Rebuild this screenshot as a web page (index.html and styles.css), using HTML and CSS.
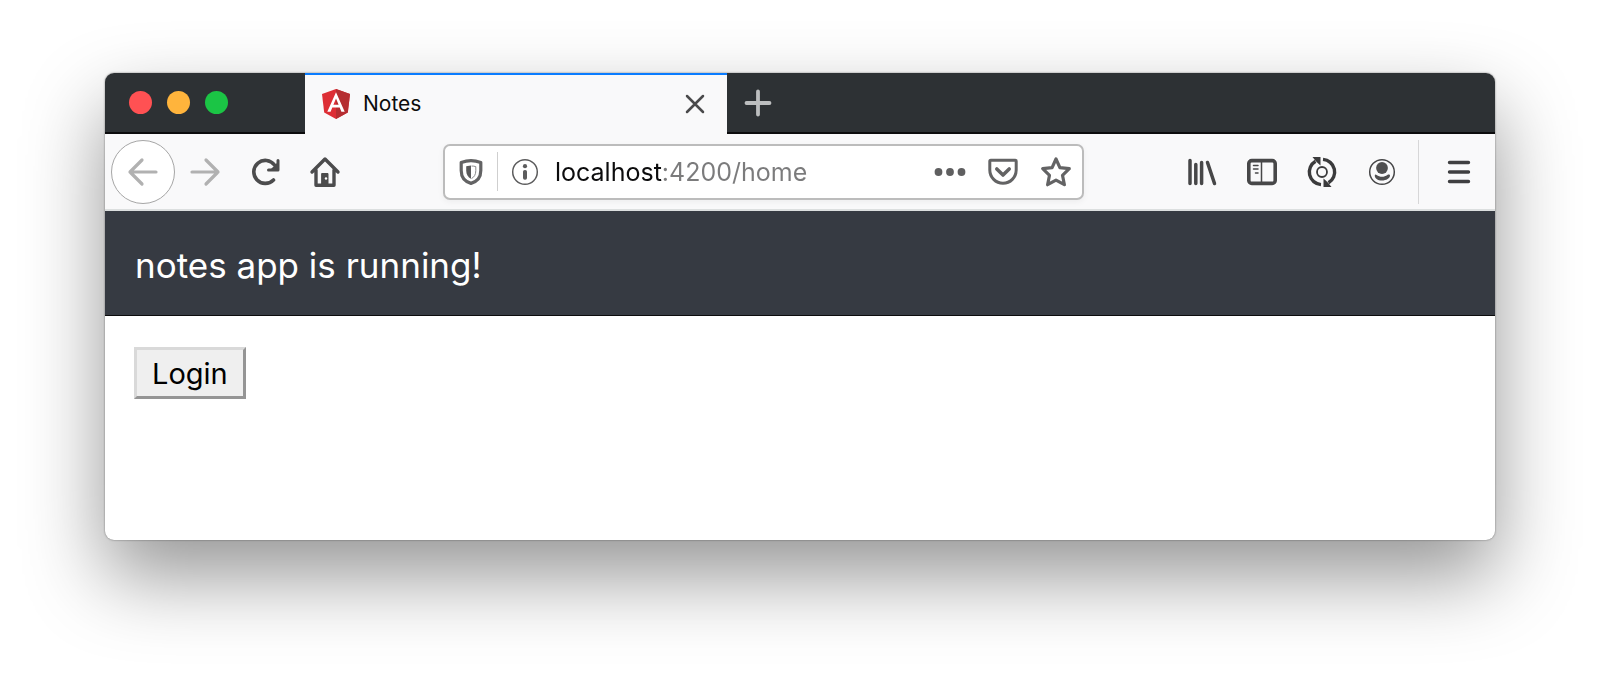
FILE: index.html
```html
<!DOCTYPE html>
<html lang="en">
    <head>
        <title>Notes</title>
        <meta charset="UTF-8" />
        <meta name="viewport" content="width=device-width, initial-scale=1.0" />
        <link rel="stylesheet" href="styles.css">
    </head>
    <body>
        <div class="window">
            <!-- Title bar with the tabs -->
            <div class="tabbar">
                <div class="lights">
                    <button class="light red" aria-label="Close window"></button>
                    <button class="light yellow" aria-label="Minimize"></button>
                    <button class="light green" aria-label="Full screen"></button>
                </div>
                <div class="tab">
                    <svg class="logo" viewBox="0 0 28 30">
                        <path fill="#dd2e35" d="M14 0 0 5l2.200 18.500L14 30l11.800-6.500L28 5z"/>
                        <path fill="#b52e31" d="M14 0v30l11.800-6.500L28 5z"/>
                        <path fill="#fff" d="M14 3.300 5.300 22.800h3.300l1.700-4.400h7.400l1.700 4.400h3.300zm0 6.200 2.600 6.200h-5.200z"/>
                    </svg>
                    <span class="tab-title">Notes</span>
                    <button class="icon-btn tab-close" aria-label="Close tab">
                        <svg width="20" height="20" viewBox="0 0 20 20" fill="none" stroke="#4a4a4b" stroke-width="2.500" stroke-linecap="round">
                            <path d="M2 2l16 16M18 2 2 18"/>
                        </svg>
                    </button>
                </div>
                <button class="icon-btn new-tab" aria-label="New tab">
                    <svg width="28" height="28" viewBox="0 0 28 28" fill="none" stroke="#bcbebf" stroke-width="3.800" stroke-linecap="round">
                        <path d="M14 2.500v23M2.500 14h23"/>
                    </svg>
                </button>
            </div>

            <!-- Navigation toolbar -->
            <div class="toolbar">
                <button class="icon-btn back" aria-label="Back">
                    <svg width="32" height="32" viewBox="0 0 32 32" fill="none" stroke="#b1b1b1" stroke-width="3.200" stroke-linecap="round" stroke-linejoin="round">
                        <path d="M29 16H3M15 4 3 16l12 12"/>
                    </svg>
                </button>
                <button class="icon-btn tool" aria-label="Forward">
                    <svg width="32" height="32" viewBox="0 0 32 32" fill="none" stroke="#b1b1b1" stroke-width="3.200" stroke-linecap="round" stroke-linejoin="round">
                        <path d="M3 16h26M17 4l12 12-12 12"/>
                    </svg>
                </button>
                <button class="icon-btn tool" aria-label="Reload">
                    <svg width="32" height="32" viewBox="0 0 32 32" fill="none" stroke="#4c4c4d" stroke-width="3.600" stroke-linecap="round" stroke-linejoin="round">
                        <path d="M24.500 24A11.500 11.500 0 1 1 25.500 9"/>
                        <path stroke-width="3" d="M29 4.500V14h-9.500"/>
                        <path fill="#4c4c4d" stroke="none" d="M29 6v8h-8z"/>
                    </svg>
                </button>
                <button class="icon-btn tool" aria-label="Home">
                    <svg width="32" height="32" viewBox="0 0 32 32" fill="none" stroke="#4c4c4d" stroke-width="3.400" stroke-linecap="round" stroke-linejoin="round">
                        <path d="M3 16 16 3l13 13M7 14v15.200h18V14"/>
                        <path fill="#4c4c4d" stroke-width="1" d="M13 17.500h6V28h-6z"/>
                        <circle cx="17" cy="22.500" r="1.200" fill="#fff" stroke="none"/>
                    </svg>
                </button>

                <div class="urlbar">
                    <button class="icon-btn shield" aria-label="Tracking protection">
                        <svg width="26" height="28" viewBox="0 0 26 28">
                            <path fill="none" stroke="#636364" stroke-width="3.200" stroke-linejoin="round" d="M13 2.600c3.600 0 6.400.600 9.800 1.800v8.200c0 6.800-4 11.200-9.800 12.800-5.800-1.600-9.800-6-9.800-12.800V4.400C6.600 3.200 9.400 2.600 13 2.600z"/>
                            <path fill="#5a5a5b" d="M13 7.500v13.300c-3-1.400-4.800-4.300-4.800-8.200V8.300z"/>
                            <path fill="none" stroke="#8a8a8b" stroke-width="1" d="M13.500 8c1.500 0 3 .200 4.300.600v4c0 3.900-1.600 6.600-4.300 7.900"/>
                        </svg>
                    </button>
                    <span class="url-divider"></span>
                    <button class="icon-btn info" aria-label="Site information">
                        <svg width="28" height="28" viewBox="0 0 28 28" fill="#5c5c5d">
                            <circle cx="14" cy="14" r="12.300" fill="none" stroke="#5c5c5d" stroke-width="1.500"/>
                            <circle cx="14" cy="8.200" r="2.100"/>
                            <rect x="12" y="12" width="4" height="9.800" rx="1.800"/>
                        </svg>
                    </button>
                    <input class="url" type="text" value="localhost:4200/home" aria-label="Address">
                    <div class="url-actions">
                        <button class="icon-btn" aria-label="Page actions">
                            <svg width="32" height="32" viewBox="0 0 32 32" fill="#5f5f60">
                                <circle cx="4.500" cy="16" r="3.900"/>
                                <circle cx="16" cy="16" r="3.900"/>
                                <circle cx="27.500" cy="16" r="3.900"/>
                            </svg>
                        </button>
                        <button class="icon-btn" aria-label="Save to Pocket">
                            <svg width="32" height="32" viewBox="0 0 32 32" fill="none" stroke="#636364" stroke-width="3" stroke-linecap="round" stroke-linejoin="round">
                                <path d="M3.800 4.200h24.400q1 0 1 1V14a13.200 13.200 0 0 1-26.400 0V5.200q0-1 1-1z"/>
                                <path stroke-width="3.600" d="m9.800 13 6.200 6 6.200-6"/>
                            </svg>
                        </button>
                        <button class="icon-btn" aria-label="Bookmark this page">
                            <svg width="32" height="32" viewBox="0 0 32 32" fill="none" stroke="#636364" stroke-width="3.200" stroke-linejoin="round">
                                <path d="m16 3 3.900 8.600 9.400 1.100-6.800 6.600 1.900 9.400-8.400-4.600-8.400 4.600 1.900-9.400-6.800-6.600 9.400-1.100z"/>
                            </svg>
                        </button>
                    </div>
                </div>

                <button class="icon-btn tool" aria-label="Library">
                    <svg width="32" height="32" viewBox="0 0 32 32" fill="none" stroke="#474748" stroke-width="3.500" stroke-linecap="round">
                        <path d="M4 4.500v23M9.800 8.500v19M15.600 6.500v21M21.500 6.500 28.500 27.500"/>
                    </svg>
                </button>
                <button class="icon-btn tool" aria-label="Sidebars">
                    <svg width="32" height="32" viewBox="0 0 32 32" fill="none" stroke="#474748">
                        <rect x="2.800" y="4.600" width="26.400" height="22.800" rx="3" stroke-width="3.600"/>
                        <path stroke-width="1.500" d="M15.500 5v22"/>
                        <path stroke-width="1.500" stroke-linecap="round" d="M7.500 9.500h4.500M7.500 13h4.500M9.500 17h2.500"/>
                    </svg>
                </button>
                <button class="icon-btn tool" aria-label="Sync">
                    <svg width="32" height="32" viewBox="0 0 32 32" fill="none" stroke="#3b3b3c" stroke-width="3.400">
                        <path d="M15 28.600A12.600 12.600 0 0 1 9.500 5.200"/>
                        <path d="M17 3.400a12.600 12.600 0 0 1 5.500 23.400"/>
                        <path fill="#3b3b3c" stroke="none" d="M6.500 1h8v8.500l-2.800-2.500-2-2zM25.500 31h-8v-8.500l2.800 2.500 2 2z"/>
                        <circle cx="16" cy="16" r="5" stroke-width="1.800"/>
                    </svg>
                </button>
                <button class="icon-btn tool" aria-label="Account">
                    <svg width="32" height="32" viewBox="0 0 32 32" fill="#4f4f50">
                        <circle cx="16" cy="16" r="12.300" fill="none" stroke="#474748" stroke-width="1.500"/>
                        <circle cx="16" cy="12" r="5.900"/>
                        <path d="M8.800 19.300c0-1 1-1 1.800-.300 3.200 2.400 7.600 2.400 10.800 0 .800-.700 2.600-.700 2.600.600 0 2.700-3.800 5-8 5s-7.600-2.300-7.200-5.300z"/>
                    </svg>
                </button>
                <span class="menu-divider"></span>
                <button class="icon-btn tool" aria-label="Menu">
                    <svg width="32" height="32" viewBox="0 0 32 32" fill="none" stroke="#3f3f41" stroke-width="3.400" stroke-linecap="round">
                        <path d="M6.500 6.500h19M6.500 16h19M6.500 25.500h19"/>
                    </svg>
                </button>
            </div>

            <!-- The page itself -->
            <header class="app-header">
                <span>notes app is running!</span>
            </header>
            <main class="app-content">
                <button class="login">Login</button>
            </main>
        </div>
    </body>
</html>
```
FILE: styles.css
```css
* {
    box-sizing: border-box;
}

body {
    margin: 0;
    padding: 73px 105px 140px;
    background-color: #fff;
    font-family: Inter, "Liberation Sans", sans-serif;
}

button {
    font-family: inherit;
}

.window {
    border-radius: 9px;
    overflow: hidden;
    background-color: #fff;
    box-shadow: 0 0 2px rgba(0, 0, 0, 0.5), 0 36px 80px rgba(0, 0, 0, 0.42);
}

.icon-btn {
    display: flex;
    flex-shrink: 0;
    align-items: center;
    justify-content: center;
    padding: 0;
    border: none;
    background: none;
}

/* tabs */
.tabbar {
    display: flex;
    height: 61px;
    background-color: #2d3134;
    box-shadow: inset 0 -2px 0 #0c0c0d;
}

.lights {
    display: flex;
    align-items: center;
    gap: 15px;
    width: 200px;
    padding: 0 24px 2px;
}

.light {
    width: 23px;
    height: 23px;
    padding: 0;
    border: none;
    border-radius: 50%;
}

.red {
    background-color: #ff5153;
}

.yellow {
    background-color: #ffb43c;
}

.green {
    background-color: #1bc545;
}

.tab {
    display: flex;
    align-items: center;
    width: 422px;
    padding: 0 22px 2px 16px;
    border-top: 2px solid #0a7cff;
    background-color: #f9f9fa;
}

.logo {
    width: 30px;
    height: 30px;
}

.tab-title {
    margin-left: 12px;
    font-size: 21px;
    line-height: 28px;
    color: #0c0c0d;
}

.tab-close {
    margin-left: auto;
}

.new-tab {
    width: 62px;
    padding-bottom: 2px;
}

/* toolbar */
.toolbar {
    display: flex;
    align-items: center;
    height: 77px;
    padding: 0 6px;
    border-bottom: 2px solid #dcdfdf;
    background-color: #f9f9fa;
}

.back {
    width: 64px;
    height: 64px;
    border: 1px solid #a6a6a6;
    border-radius: 50%;
    background-color: #fff;
}

.tool {
    width: 60px;
    height: 60px;
}

.urlbar {
    display: flex;
    flex: 1;
    align-items: center;
    min-width: 0;
    height: 56px;
    margin: 0 88px;
    padding: 0 10px 0 13px;
    border: 2px solid #bcbcbc;
    border-radius: 7px;
    background-color: #fff;
    box-shadow: 0 2px 6px rgba(0, 0, 0, 0.05);
}

.url-divider {
    width: 1px;
    height: 39px;
    margin: 0 13px;
    background-color: #cfcfcf;
}

/* host name in black, the rest of the address in grey */
.url {
    flex: 1;
    min-width: 0;
    height: 40px;
    margin-left: 16px;
    padding: 0;
    border: none;
    outline: none;
    background: linear-gradient(to right, #0c0c0d 107px, #7b7b7c 107px);
    background-clip: text;
    -webkit-background-clip: text;
    -webkit-text-fill-color: transparent;
    font-family: inherit;
    font-size: 25px;
    color: #7b7b7c;
}

.url-actions {
    display: flex;
    gap: 21px;
}

.menu-divider {
    width: 1px;
    height: 64px;
    margin: 0 10px 0 6px;
    background-color: #d7d7d8;
}

/* app */
.app-header {
    padding: 32px 30px 28px;
    border-bottom: 1px solid #0c0c0d;
    background-color: #363a42;
    font-size: 35px;
    line-height: 44px;
    color: #fff;
}

.app-content {
    min-height: 224px;
    padding: 31px 29px;
}

.login {
    height: 52px;
    padding: 0 15px;
    border: 3px solid;
    border-color: #d9d9d9 #959595 #959595 #d9d9d9;
    background-color: #efefef;
    font-size: 29px;
    color: #000;
}
```
